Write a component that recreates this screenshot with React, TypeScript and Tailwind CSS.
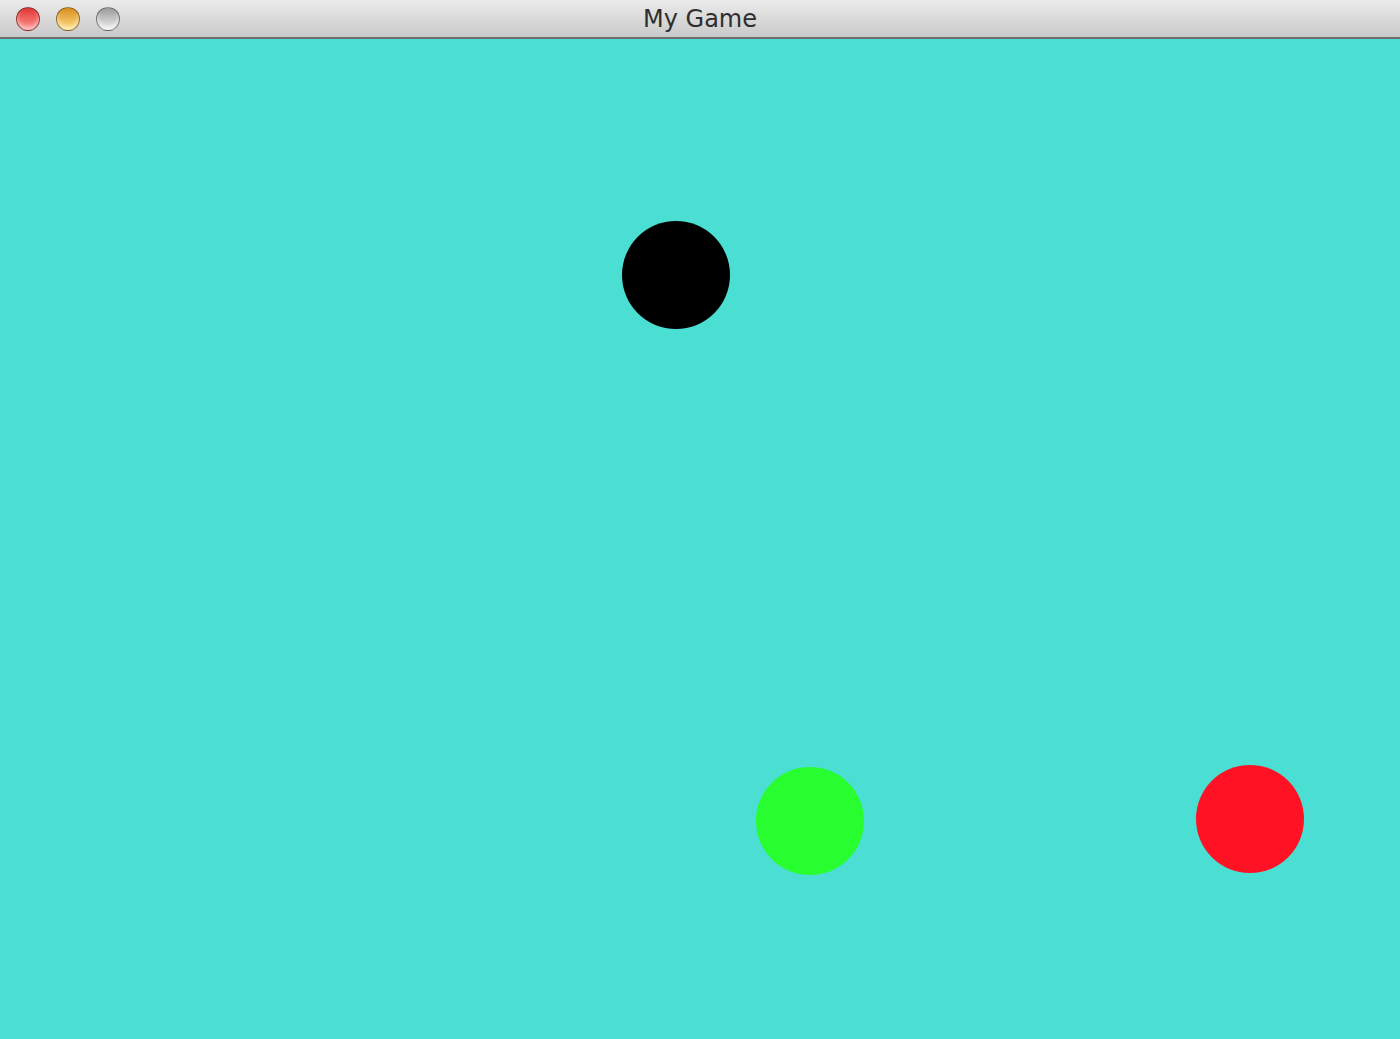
const balls = [
  { key: "black", className: "left-[622px] top-[182px] bg-black" },
  { key: "green", className: "left-[756px] top-[728px] bg-[#27fd2f]" },
  { key: "red", className: "left-[1196px] top-[726px] bg-[#fe1224]" },
];

const TrafficLight = ({ color }: { color: string }) => (
  <div
    className={`h-6 w-6 rounded-full border border-black/40 shadow-[inset_0_-3px_4px_rgba(255,255,255,0.5)] ${color}`}
  />
);

export default function App() {
  return (
    <div className="flex h-[1039px] w-[1400px] flex-col overflow-hidden bg-[#4adfd2]">
      {/* Title bar */}
      <div className="relative flex h-[39px] shrink-0 items-center border-b-2 border-[#6e6e6e] bg-gradient-to-b from-[#ebebeb] to-[#c9c9c9]">
        <div className="flex items-center gap-4 pl-4">
          <TrafficLight color="bg-gradient-to-b from-[#e03030] to-[#ff8f8f]" />
          <TrafficLight color="bg-gradient-to-b from-[#d98c10] to-[#ffe080]" />
          <TrafficLight color="bg-gradient-to-b from-[#9a9a9a] to-[#f2f2f2]" />
        </div>
        <div className="absolute inset-0 flex items-center justify-center font-['DejaVu_Sans',sans-serif] text-[24px] text-[#2e2e2e]">
          My Game
        </div>
      </div>

      {/* Canvas */}
      <div className="relative flex-1">
        {balls.map((b) => (
          <div key={b.key} className={`absolute h-[108px] w-[108px] rounded-full ${b.className}`} />
        ))}
      </div>
    </div>
  );
}
